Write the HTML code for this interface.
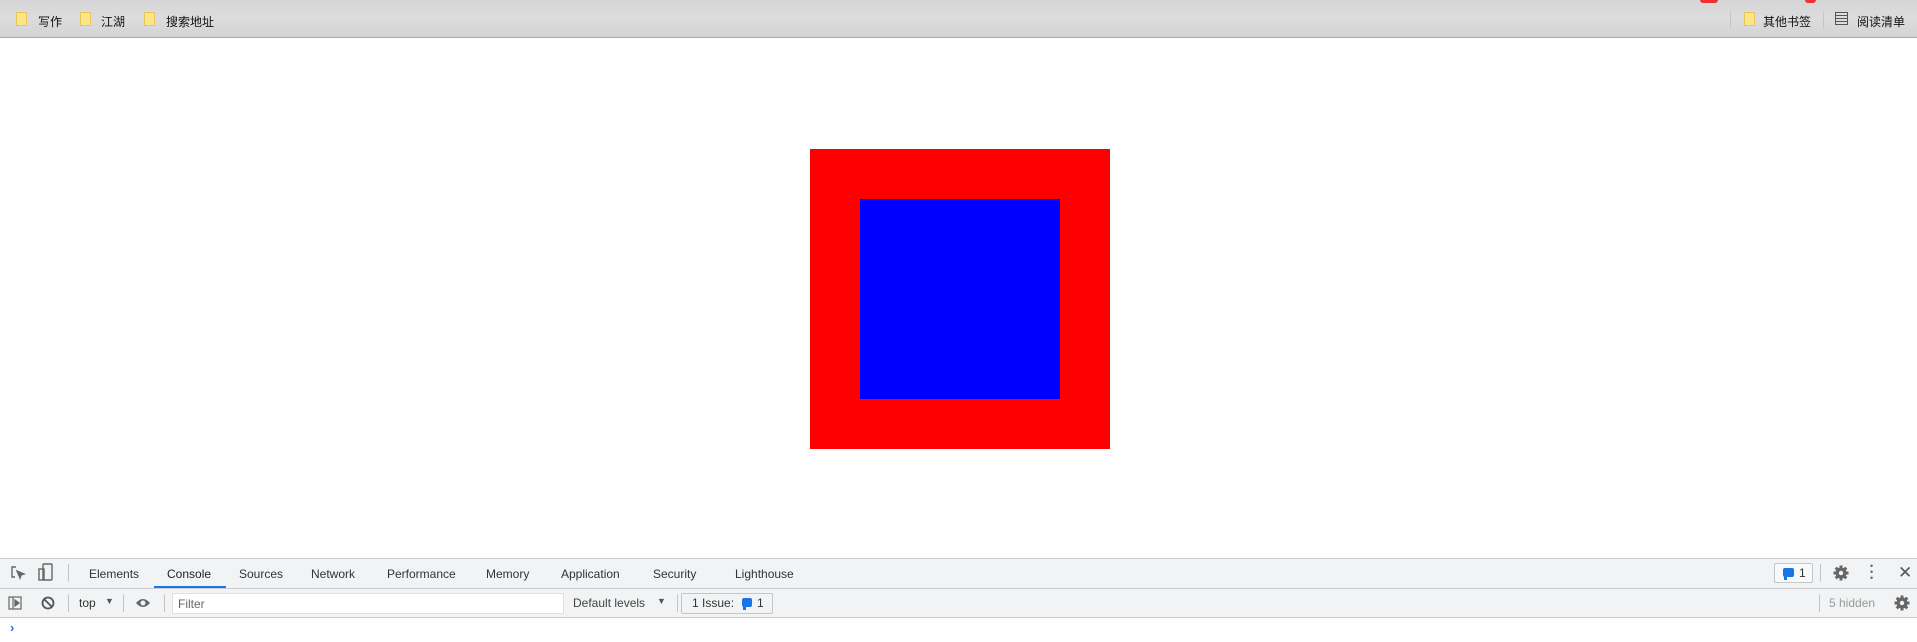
<!DOCTYPE html>
<html><head><meta charset="utf-8"><style>
*{margin:0;padding:0;box-sizing:border-box}
body{width:1917px;height:642px;position:relative;overflow:hidden;background:#fff;font-family:"Liberation Sans","Noto Sans CJK SC",sans-serif;font-size:12px;color:#333}
.a{position:absolute}
#bm{left:0;top:0;width:1917px;height:38px;background:linear-gradient(#d6d6d6,#dcdcdc 50%,#d4d4d4);border-bottom:1px solid #a8a8a8}
.fold{width:11px;height:14px;background:#fde48a;border:1px solid #e8c654;top:12px;border-radius:1px}
.bt{top:13px;color:#111;font-size:12px}
.vd{width:1px;background:#c4c4c4}
#dt{left:0;top:558px;width:1917px;height:59px;background:#f1f3f4;border-top:1px solid #cbcdd1}
.tab{top:9px;color:#333;font-size:12px}
.hl{left:0;width:1917px;height:1px;background:#cbcdd1}
</style></head><body>
<div id="bm" class="a"></div>
<div class="a" style="left:1700px;top:0;width:18px;height:3px;background:#e33;border-radius:0 0 3px 3px"></div>
<div class="a" style="left:1805px;top:0;width:11px;height:3px;background:#e33;border-radius:0 0 3px 3px"></div>
<div class="a fold" style="left:16px"></div><div class="a bt" style="left:38px">写作</div>
<div class="a fold" style="left:80px"></div><div class="a bt" style="left:101px">江湖</div>
<div class="a fold" style="left:144px"></div><div class="a bt" style="left:166px">搜索地址</div>
<div class="a vd" style="left:1730px;top:11px;height:17px"></div>
<div class="a fold" style="left:1744px"></div><div class="a bt" style="left:1763px">其他书签</div>
<div class="a vd" style="left:1823px;top:11px;height:17px"></div>
<div class="a" style="left:1835px;top:12px;width:13px;height:13px;border:1.5px solid #555;background:repeating-linear-gradient(#ddd 0 2px,#555 2px 3px)"></div>
<div class="a bt" style="left:1857px">阅读清单</div>

<div class="a" style="left:810px;top:149px;width:300px;height:300px;background:#f00"></div>
<div class="a" style="left:860px;top:199px;width:200px;height:200px;background:#00f"></div>

<div id="dt" class="a"></div>
<div class="a hl" style="top:588px"></div>
<div class="a hl" style="top:617px"></div>
<svg class="a" style="left:10px;top:565px" width="16" height="16" viewBox="0 0 16 16" fill="none" stroke="#666" stroke-width="1.4"><path d="M6 2H2v10h3"/><path d="M7 6l7 3-3 1-1 3z" fill="#666"/></svg>
<svg class="a" style="left:38px;top:563px" width="16" height="18" viewBox="0 0 16 18" fill="none" stroke="#666" stroke-width="1.4"><rect x="5" y="1" width="9" height="16" rx="1"/><rect x="1" y="6" width="5" height="11"/></svg>
<div class="a vd" style="left:68px;top:564px;height:18px"></div>
<div class="a tab" style="left:89px;top:567px">Elements</div>
<div class="a tab" style="left:167px;top:567px;color:#222">Console</div>
<div class="a" style="left:154px;top:586px;width:72px;height:2px;background:#1a73e8"></div>
<div class="a tab" style="left:239px;top:567px">Sources</div>
<div class="a tab" style="left:311px;top:567px">Network</div>
<div class="a tab" style="left:387px;top:567px">Performance</div>
<div class="a tab" style="left:486px;top:567px">Memory</div>
<div class="a tab" style="left:561px;top:567px">Application</div>
<div class="a tab" style="left:653px;top:567px">Security</div>
<div class="a tab" style="left:735px;top:567px">Lighthouse</div>
<div class="a" style="left:1774px;top:563px;width:39px;height:20px;border:1px solid #c6c6c6;border-radius:2px;background:#f8f9fa"></div>
<div class="a" style="left:1783px;top:568px;width:11px;height:9px;background:#1a73e8;border-radius:2px"></div>
<div class="a" style="left:1784px;top:576px;width:3px;height:4px;background:#1a73e8"></div>
<div class="a" style="left:1799px;top:566px;font-size:12px;color:#333">1</div>
<div class="a vd" style="left:1820px;top:564px;height:18px"></div>
<svg class="a" style="left:1833px;top:565px" width="16" height="16" viewBox="0 0 16 16"><g fill="#666"><circle cx="8" cy="8" r="5.5"/><rect x="6.5" y="0.5" width="3" height="15"/><rect x="0.5" y="6.5" width="15" height="3"/><rect x="6.5" y="0.5" width="3" height="15" transform="rotate(45 8 8)"/><rect x="6.5" y="0.5" width="3" height="15" transform="rotate(-45 8 8)"/></g><circle cx="8" cy="8" r="2.2" fill="#f1f3f4"/></svg>
<div class="a" style="left:1870px;top:563px;width:4px;line-height:6px;font-size:9px;color:#666">•<br>•<br>•</div>
<div class="a" style="left:1898px;top:563px;font-size:17px;color:#555;font-family:'DejaVu Sans'">✕</div>

<svg class="a" style="left:8px;top:596px" width="14" height="14" viewBox="0 0 14 14" fill="none" stroke="#666" stroke-width="1.2"><rect x="1" y="1" width="12" height="12"/><path d="M5 1v12"/><path d="M7 4l4 3-4 3z" fill="#666"/></svg>
<svg class="a" style="left:41px;top:596px" width="14" height="14" viewBox="0 0 14 14" fill="none" stroke="#555" stroke-width="1.8"><circle cx="7" cy="7" r="5.5"/><path d="M3 3l8 8"/></svg>
<div class="a vd" style="left:68px;top:594px;height:18px"></div>
<div class="a" style="left:79px;top:596px;color:#333">top</div>
<div class="a" style="left:105px;top:596px;font-size:9px;color:#555">▼</div>
<div class="a vd" style="left:123px;top:594px;height:18px"></div>
<svg class="a" style="left:135px;top:597px" width="16" height="12" viewBox="0 0 16 12"><path d="M1 6Q8-2 15 6Q8 14 1 6z" fill="#666"/><circle cx="8" cy="6" r="2.5" fill="#f1f3f4"/></svg>
<div class="a vd" style="left:164px;top:594px;height:18px"></div>
<div class="a" style="left:172px;top:593px;width:392px;height:21px;background:#fff;border:1px solid #e0e0e0"></div>
<div class="a" style="left:178px;top:597px;color:#666">Filter</div>
<div class="a" style="left:573px;top:596px;color:#444">Default levels</div>
<div class="a" style="left:657px;top:596px;font-size:9px;color:#555">▼</div>
<div class="a vd" style="left:677px;top:594px;height:18px"></div>
<div class="a" style="left:681px;top:593px;width:92px;height:21px;border:1px solid #c6c6c6;border-radius:2px"></div>
<div class="a" style="left:692px;top:596px;color:#333">1 Issue:</div>
<div class="a" style="left:742px;top:598px;width:10px;height:9px;background:#1a73e8;border-radius:2px"></div>
<div class="a" style="left:743px;top:606px;width:3px;height:4px;background:#1a73e8"></div>
<div class="a" style="left:757px;top:596px;color:#333">1</div>
<div class="a vd" style="left:1819px;top:594px;height:18px"></div>
<div class="a" style="left:1829px;top:596px;color:#999">5 hidden</div>
<svg class="a" style="left:1894px;top:595px" width="16" height="16" viewBox="0 0 16 16"><g fill="#666"><circle cx="8" cy="8" r="5.5"/><rect x="6.5" y="0.5" width="3" height="15"/><rect x="0.5" y="6.5" width="15" height="3"/><rect x="6.5" y="0.5" width="3" height="15" transform="rotate(45 8 8)"/><rect x="6.5" y="0.5" width="3" height="15" transform="rotate(-45 8 8)"/></g><circle cx="8" cy="8" r="2.2" fill="#f1f3f4"/></svg>
<div class="a" style="left:10px;top:620px;font-size:13px;color:#1a73e8;font-weight:bold">›</div>
</body></html>
